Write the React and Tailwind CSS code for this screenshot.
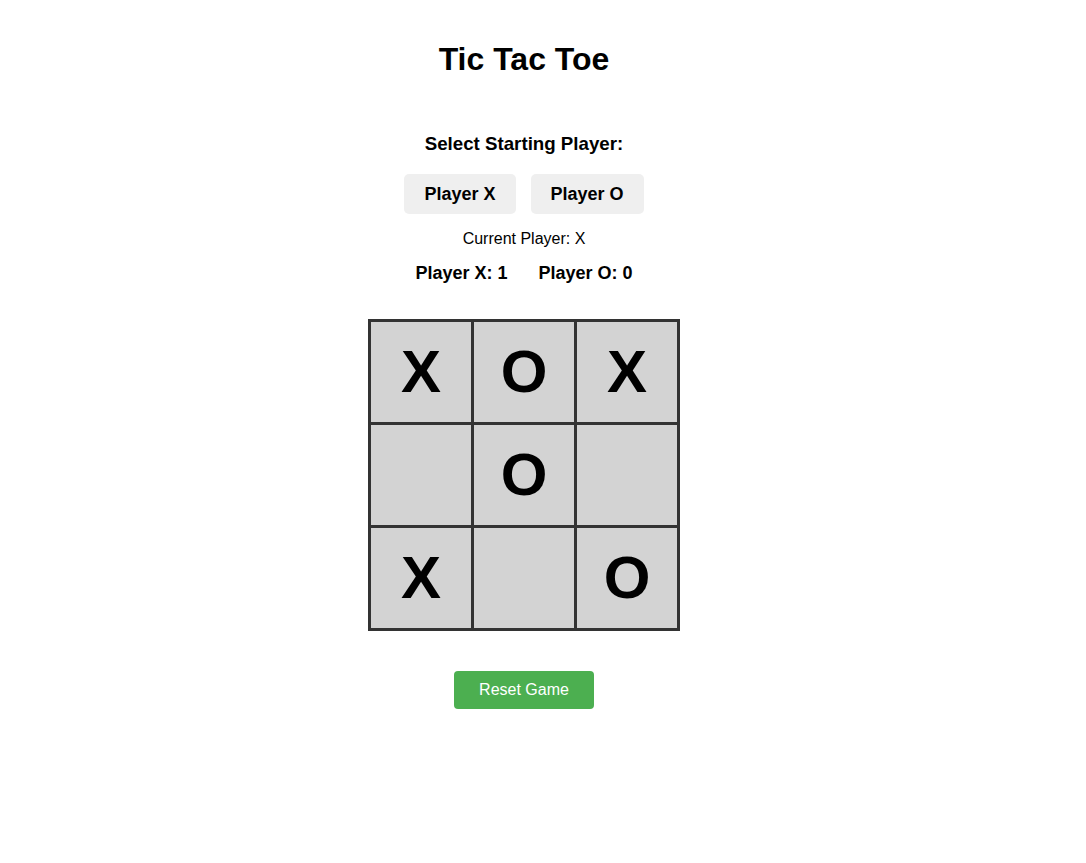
const board = ["X", "O", "X", "", "O", "", "X", "", "O"];

const Cell = ({ value }) => (
  <div className="w-[100px] h-[100px] bg-[#d3d3d3] flex items-center justify-center text-[60px] font-bold leading-none text-black">
    {value}
  </div>
);

export default function App() {
  return (
    <div className="w-[1048px] flex flex-col items-center text-black font-['Liberation_Sans',Arial,sans-serif] bg-white min-h-[863px]">
      <h1 className="mt-[39px] text-[32px] leading-[40px] font-bold">Tic Tac Toe</h1>

      <h3 className="mt-[53px] text-[18.72px] leading-[24px] font-bold">Select Starting Player:</h3>
      <div className="mt-[18px] flex gap-[15px]">
        <button className="bg-[#efefef] rounded-[5px] px-5 py-[10px] text-[18px] leading-[20px] font-bold">Player X</button>
        <button className="bg-[#efefef] rounded-[5px] px-5 py-[10px] text-[18px] leading-[20px] font-bold">Player O</button>
      </div>

      <p className="mt-[15px] text-[16px] leading-[20px]">Current Player: X</p>

      <div className="mt-[12px] flex gap-[31px] text-[18px] leading-[24px] font-bold">
        <span>Player X: 1</span>
        <span>Player O: 0</span>
      </div>

      {/* plateau */}
      <div className="mt-[34px] grid grid-cols-3 gap-[3px] p-[3px] bg-[#333333]">
        {board.map((v, i) => (
          <Cell key={i} value={v} />
        ))}
      </div>

      <button className="mt-[40px] bg-[#4caf50] text-white rounded-[4px] px-[25px] py-[10px] text-[16px] leading-[18px]">
        Reset Game
      </button>
    </div>
  );
}
